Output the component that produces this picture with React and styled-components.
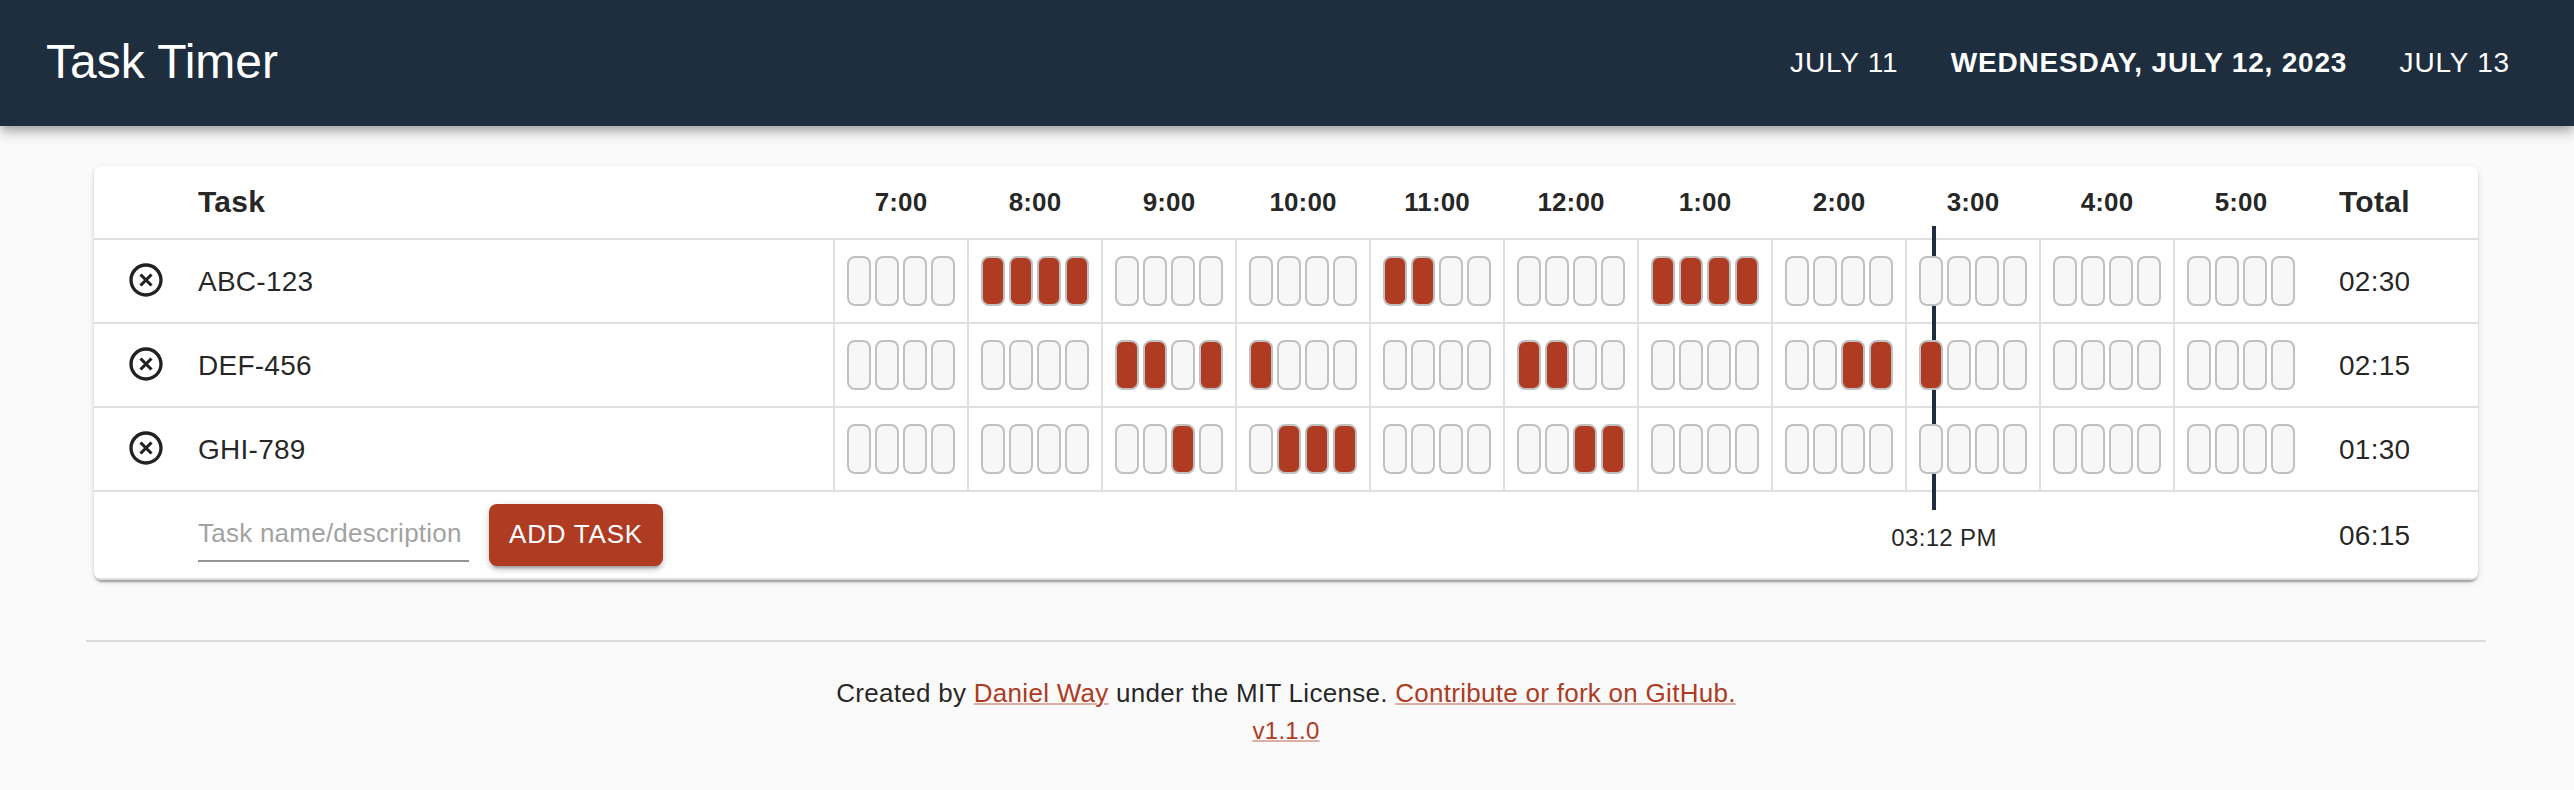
import React from "react";
import styled, { createGlobalStyle } from "styled-components";

const Global = createGlobalStyle`
  *, *::before, *::after { box-sizing: border-box; }
  body {
    margin: 0;
    background: #fafafa;
    color: rgba(0, 0, 0, 0.87);
    font-family: "Liberation Sans", Helvetica, Arial, sans-serif;
    font-size: 28px;
    -webkit-font-smoothing: antialiased;
  }
`;

const AppBar = styled.header`
  position: relative;
  display: flex;
  align-items: center;
  justify-content: space-between;
  height: 126px;
  padding: 0 64px 0 46px;
  background: #1e2e3e;
  color: #fff;
  box-shadow: 0 4px 8px -2px rgba(0, 0, 0, 0.2), 0 8px 10px 0 rgba(0, 0, 0, 0.14),
    0 2px 20px 0 rgba(0, 0, 0, 0.12);
`;

const Title = styled.h1`
  margin: 0;
  padding-bottom: 2px;
  font-size: 48px;
  font-weight: 400;
  line-height: 64px;
`;

const DateNav = styled.nav`
  display: flex;
  align-items: center;
  gap: 52.4px;
`;

const DateButton = styled.button`
  padding: 0;
  border: 0;
  background: none;
  color: inherit;
  font: ${(p) => (p.$current ? 700 : 400)} 28px/48px "Liberation Sans", Helvetica, sans-serif;
  letter-spacing: 0.8px;
  text-transform: uppercase;
  white-space: nowrap;
`;

const Sheet = styled.main`
  position: relative;
  z-index: 0;
  width: 2384px;
  margin: 40px 0 0 94px;
  border-radius: 8px;
  background: #fff;
  box-shadow: 0 4px 2px -2px rgba(0, 0, 0, 0.2), 0 2px 2px 0 rgba(0, 0, 0, 0.14),
    0 2px 6px 0 rgba(0, 0, 0, 0.12);
  overflow: hidden;
`;

const Row = styled.div`
  display: grid;
  grid-template-columns: 104px 635px repeat(11, 134px) 171px;
  height: ${(p) => p.$height}px;
  border-bottom: 2px solid #e0e0e0;
`;

const NameCell = styled.div`
  grid-column: 2;
  display: flex;
  align-items: center;
  padding-top: ${(p) => (p.$head ? 0 : 2)}px;
  font-size: ${(p) => (p.$head ? 30 : 28)}px;
  font-weight: ${(p) => (p.$head ? 700 : 400)};
  letter-spacing: 0.26px;
`;

const HourHead = styled.div`
  display: flex;
  align-items: center;
  justify-content: center;
  padding-left: 2px;
  font-size: 26px;
  font-weight: 700;
  letter-spacing: 0.1px;
`;

const HourCell = styled.div`
  display: flex;
  align-items: center;
  gap: 4px;
  padding-left: 12px;
  border-left: 2px solid #e0e0e0;
`;

/* Positioned so that the slots cover the current-time line. */
const Slot = styled.span`
  position: relative;
  z-index: 1;
  width: 24px;
  height: 50px;
  border: 2px solid #c0c0c0;
  border-radius: 8px;
  background: ${(p) => (p.$on ? "#ae3b22" : "#f7f7f7")};
`;

const TotalCell = styled.div`
  grid-column: 14;
  display: flex;
  align-items: center;
  padding: ${(p) => (p.$head ? 0 : 2)}px 0 0 32px;
  font-size: ${(p) => (p.$head ? 30 : 28)}px;
  font-weight: ${(p) => (p.$head ? 700 : 400)};
  letter-spacing: 0.26px;
`;

const RemoveCell = styled.div`
  display: flex;
  align-items: center;
  padding: 0 0 2px 32px;
`;

const AddCell = styled.form`
  grid-column: 2;
  display: flex;
  align-items: center;
  gap: 20px;
`;

const TaskInput = styled.input`
  width: 271px;
  height: 55px;
  margin: 0 0 1px;
  padding: 0;
  border: 0;
  border-bottom: 2px solid #949494;
  background: none;
  font: 400 26px "Liberation Sans", Helvetica, sans-serif;
  letter-spacing: 0.24px;
  &::placeholder { color: #a2a2a2; opacity: 1; }
`;

const AddButton = styled.button`
  width: 174px;
  height: 62px;
  padding: 0 0 2px;
  border: 0;
  border-radius: 8px;
  background: #ae3b22;
  color: #fff;
  font: 400 26px "Liberation Sans", Helvetica, sans-serif;
  letter-spacing: 0.8px;
  box-shadow: 0 6px 2px -4px rgba(0, 0, 0, 0.2), 0 4px 4px 0 rgba(0, 0, 0, 0.14),
    0 2px 10px 0 rgba(0, 0, 0, 0.12);
`;

const NowLine = styled.div`
  position: absolute;
  left: 1838px;
  top: 60px;
  width: 4px;
  height: 284px;
  background: #1e2e3e;
`;

const NowLabel = styled.time`
  position: absolute;
  left: 1850px;
  top: 356px;
  transform: translateX(-50%);
  font-size: 24px;
  line-height: 32px;
  letter-spacing: 0.35px;
  white-space: nowrap;
`;

const Footer = styled.footer`
  margin: 60px 88px 0 86px;
  border-top: 2px solid #dcdcdc;
  padding-top: 31px;
  text-align: center;
  font-size: 26px;
  line-height: 40px;
  letter-spacing: 0.28px;
`;

const Version = styled.div`
  font-size: 24px;
  line-height: 36px;
`;

const Link = styled.a`
  color: #ae3b22;
  text-decoration: underline;
  text-decoration-color: rgba(174, 59, 34, 0.4);
  text-decoration-thickness: 2px;
`;

const RemoveIcon = () => (
  <svg width="40" height="40" viewBox="0 0 24 24" fill="#212121">
    <path d="M12 2C6.47 2 2 6.47 2 12s4.47 10 10 10 10-4.47 10-10S17.53 2 12 2zm0 18c-4.41 0-8-3.59-8-8s3.59-8 8-8 8 3.59 8 8-3.59 8-8 8z" />
    <path d="M8.7 8.7l6.6 6.6M15.3 8.7l-6.6 6.6" stroke="#212121" strokeWidth="1.9" />
  </svg>
);

const HOURS = ["7:00", "8:00", "9:00", "10:00", "11:00", "12:00", "1:00", "2:00", "3:00", "4:00", "5:00"];

const TASKS = [
  { name: "ABC-123", total: "02:30", slots: [4, 5, 6, 7, 16, 17, 24, 25, 26, 27] },
  { name: "DEF-456", total: "02:15", slots: [8, 9, 11, 12, 20, 21, 30, 31, 32] },
  { name: "GHI-789", total: "01:30", slots: [10, 13, 14, 15, 22, 23] },
];

export default function App() {
  return (
    <>
      <Global />
      <AppBar>
        <Title>Task Timer</Title>
        <DateNav>
          <DateButton>July 11</DateButton>
          <DateButton $current>Wednesday, July 12, 2023</DateButton>
          <DateButton>July 13</DateButton>
        </DateNav>
      </AppBar>
      <Sheet>
        <Row $height={74}>
          <NameCell $head>Task</NameCell>
          {HOURS.map((h) => (
            <HourHead key={h}>{h}</HourHead>
          ))}
          <TotalCell $head>Total</TotalCell>
        </Row>
        {TASKS.map((task) => (
          <Row key={task.name} $height={84}>
            <RemoveCell>
              <RemoveIcon />
            </RemoveCell>
            <NameCell>{task.name}</NameCell>
            {HOURS.map((h, i) => (
              <HourCell key={h}>
                {[0, 1, 2, 3].map((q) => (
                  <Slot key={q} $on={task.slots.includes(i * 4 + q)} />
                ))}
              </HourCell>
            ))}
            <TotalCell>{task.total}</TotalCell>
          </Row>
        ))}
        <Row $height={88}>
          <AddCell>
            <TaskInput placeholder="Task name/description" />
            <AddButton type="button">ADD TASK</AddButton>
          </AddCell>
          <TotalCell>06:15</TotalCell>
        </Row>
        <NowLine />
        <NowLabel>03:12 PM</NowLabel>
      </Sheet>
      <Footer>
        <div>
          Created by <Link>Daniel Way</Link> under the MIT License. <Link>Contribute or fork on GitHub.</Link>
        </div>
        <Version>
          <Link>v1.1.0</Link>
        </Version>
      </Footer>
    </>
  );
}
